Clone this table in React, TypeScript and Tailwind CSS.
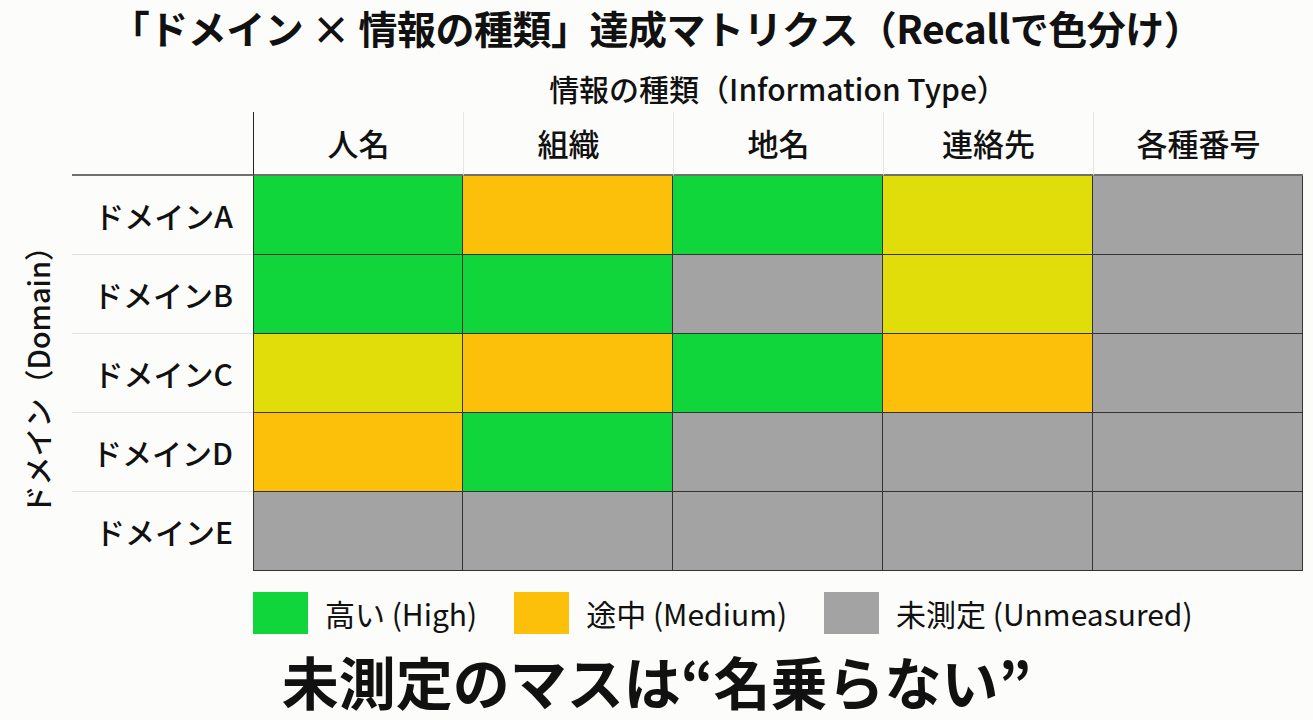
const COLS = ["人名", "組織", "地名", "連絡先", "各種番号"];

const FILL: Record<string, string> = {
  g: "bg-[#10d53b]",
  o: "bg-[#fcc00b]",
  y: "bg-[#e1dd0b]",
  n: "bg-[#a3a3a3]",
};

const ROWS = [
  { label: "ドメインA", cells: ["g", "o", "g", "y", "n"] },
  { label: "ドメインB", cells: ["g", "g", "n", "y", "n"] },
  { label: "ドメインC", cells: ["y", "o", "g", "o", "n"] },
  { label: "ドメインD", cells: ["o", "g", "n", "n", "n"] },
  { label: "ドメインE", cells: ["n", "n", "n", "n", "n"] },
];

const LEGEND = [
  { fill: "bg-[#10d53b]", text: "高い (High)" },
  { fill: "bg-[#fcc00b]", text: "途中 (Medium)" },
  { fill: "bg-[#a3a3a3]", text: "未測定 (Unmeasured)" },
];

export default function App() {
  return (
    <div
      className="w-[1313px] h-[720px] overflow-hidden bg-[#fcfcfa] text-[#111]"
      style={{ fontFamily: '"Noto Sans CJK JP", "Noto Sans", sans-serif' }}
    >
      {/* title */}
      <h1 className="pt-[4px] text-center text-[39px] leading-[46px] font-bold tracking-[-0.5px]">
        「ドメイン × 情報の種類」達成マトリクス（Recallで色分け）
      </h1>

      {/* matrix */}
      <div className="mt-[20px] grid grid-cols-[72px_181px_repeat(5,210px)]">
        <div className="col-start-3 col-span-5 text-center text-[30px] leading-[36px] font-medium">
          情報の種類（Information Type）
        </div>

        {/* header row */}
        <div className="col-start-2 mt-[6px] h-[64px] border-b-2 border-[#707070]" />
        {COLS.map((c, i) => (
          <div
            key={c}
            className={`mt-[6px] h-[64px] flex items-center justify-center border-b-2 border-b-[#707070] text-[31px] font-medium ${
              i === 0 ? "border-l border-l-[#222]" : "border-l border-l-[#e4e4e4]"
            }`}
          >
            {c}
          </div>
        ))}

        {/* axis label */}
        <div className="row-span-5 flex items-center justify-center pl-[4px]">
          <span className="[writing-mode:vertical-rl] [text-orientation:sideways] rotate-180 text-[29px] font-medium whitespace-nowrap">
            ドメイン（Domain）
          </span>
        </div>

        {ROWS.map((r, ri) => (
          <div key={r.label} className="contents">
            <div
              className={`h-[79px] flex items-center justify-end pr-[20px] text-[30px] font-medium ${
                ri < ROWS.length - 1 ? "border-b border-[#e2e2e2]" : ""
              }`}
            >
              {r.label}
            </div>
            {r.cells.map((k, ci) => (
              <div
                key={ci}
                className={`h-[79px] border-r border-b border-[#333] ${FILL[k]} ${
                  ci === 0 ? "border-l" : ""
                }`}
              />
            ))}
          </div>
        ))}
      </div>

      {/* legend */}
      <div className="mt-[21px] ml-[253px] flex items-center gap-[37px]">
        {LEGEND.map((l) => (
          <div key={l.text} className="flex items-center gap-[17px]">
            <div className={`w-[55px] h-[42px] ${l.fill}`} />
            <span className="text-[30px] leading-[42px]">{l.text}</span>
          </div>
        ))}
      </div>

      {/* bottom message */}
      <p className="mt-[16px] text-center text-[57px] leading-[60px] font-bold">
        未測定のマスは“名乗らない”
      </p>
    </div>
  );
}
